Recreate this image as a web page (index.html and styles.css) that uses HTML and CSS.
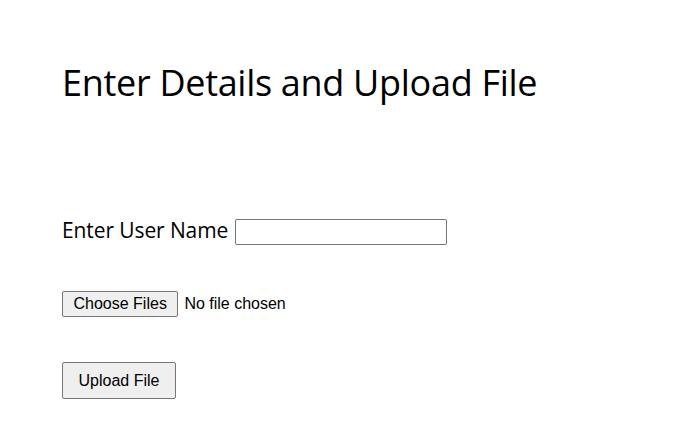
FILE: index.html
```html
<!DOCTYPE html>
<html lang="en">
<head>
<meta charset="utf-8">
<title>Upload File</title>
<link rel="stylesheet" href="styles.css">
</head>
<body>
<main class="page">
  <h1 class="title">Enter Details and Upload File</h1>
  <form class="form">
    <div class="name-row">
      <label class="name-label" for="username">Enter User Name</label>
      <input class="name-input" type="text" id="username">
    </div>
    <div class="file-row">
      <button type="button" class="file-button">Choose Files</button>
      <span class="file-status">No file chosen</span>
    </div>
    <div class="submit-row">
      <button type="submit" class="upload-button">Upload File</button>
    </div>
  </form>
</main>
</body>
</html>
```
FILE: styles.css
```css
html, body {
  margin: 0;
  padding: 0;
  background: #ffffff;
}

.page {
  padding: 59px 0 0 62px;
  color: #000000;
}

.title {
  margin: 0;
  font-family: "Open Sans", "Noto Sans", sans-serif;
  font-weight: 400;
  font-size: 36px;
  line-height: 48px;
  letter-spacing: -0.3px;
}

.form {
  display: flex;
  flex-direction: column;
  margin-top: 112px;
}

.name-row {
  display: flex;
  align-items: center;
  gap: 7px;
}

.name-label {
  font-family: "Open Sans", "Noto Sans", sans-serif;
  font-size: 21px;
  line-height: 26px;
  letter-spacing: -0.1px;
  position: relative;
  top: -2px;
}

.name-input {
  box-sizing: border-box;
  width: 212px;
  height: 26px;
  margin: 0;
  border: 1px solid #767676;
  border-radius: 2px;
  padding: 1px 4px;
  font-family: "Liberation Sans", Arial, sans-serif;
  font-size: 16px;
}

.file-row {
  display: flex;
  align-items: center;
  gap: 6px;
  margin-top: 46px;
}

.file-button,
.upload-button {
  box-sizing: border-box;
  margin: 0;
  border: 1px solid #767676;
  border-radius: 2px;
  background: #efefef;
  color: #000000;
  font-family: "Liberation Sans", Arial, sans-serif;
  font-size: 16px;
}

.file-button {
  height: 26px;
  padding: 0 10.5px;
}

.file-status {
  font-family: "Liberation Sans", Arial, sans-serif;
  font-size: 16px;
}

.submit-row {
  margin-top: 45px;
}

.upload-button {
  height: 37px;
  padding: 0 15.5px;
}
```
